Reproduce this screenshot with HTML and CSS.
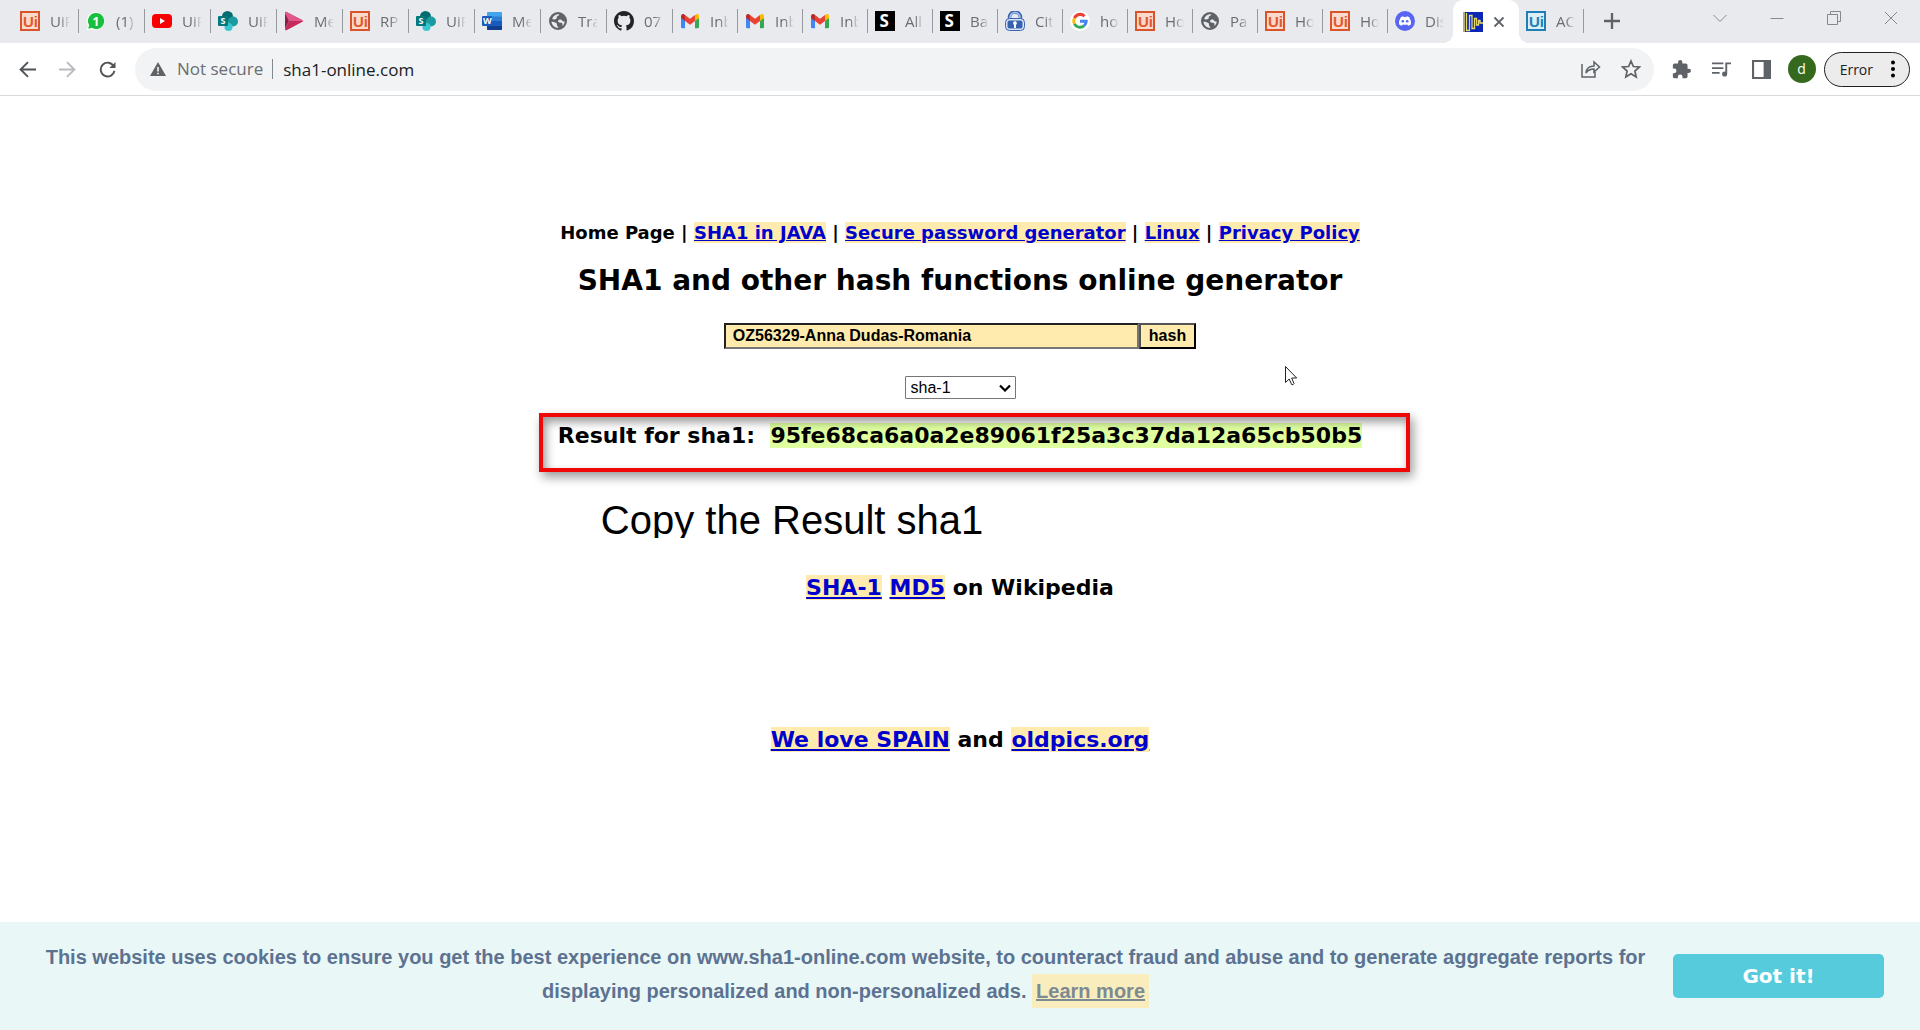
FILE: index.html
```html
<!DOCTYPE html>
<html lang="en">
<head>
<meta charset="utf-8">
<title>SHA1 and other hash functions online generator</title>
<link rel="stylesheet" href="styles.css">
</head>
<body>
<svg class="sprite" aria-hidden="true">
  <symbol id="i-uipath" viewBox="0 0 20 20"><rect width="20" height="20" fill="#fbd9cb"/><rect x="1" y="1" width="18" height="18" fill="none" stroke="#d9542b" stroke-width="2"/><text x="3" y="16" class="ico-ui">Ui</text></symbol>
  <symbol id="i-uiblue" viewBox="0 0 20 20"><rect width="20" height="20" fill="#d9f0fb"/><rect x="1" y="1" width="18" height="18" fill="none" stroke="#1f7fb5" stroke-width="2"/><text x="3" y="16" class="ico-ui ico-ui-blue">Ui</text></symbol>
  <symbol id="i-whatsapp" viewBox="0 0 20 20"><path d="M10 .8a9.3 9.3 0 0 1 0 18.500 9.300 9.300 0 0 1-4.500-1.100L.6 19.600l1.300-4.800A9.300 9.300 0 0 1 10 .8z" fill="#f4fff6"/><path d="M10.200 2a8 8 0 1 1-4.300 14.800L2.200 17.800l1-3.600A8 8 0 0 1 10.200 2z" fill="#17bf3e"/><text x="6.500" y="14.500" class="ico-one">1</text></symbol>
  <symbol id="i-youtube" viewBox="0 0 20 20"><rect y="3" width="20" height="14" rx="4" fill="#f60002"/><path d="M8 7v6l5-3z" fill="#fff"/></symbol>
  <symbol id="i-sharepoint" viewBox="0 0 20 20"><circle cx="9.500" cy="5.500" r="5.500" fill="#036c70"/><circle cx="15" cy="10.500" r="5" fill="#1a9ba1"/><circle cx="10.500" cy="16" r="4" fill="#37c6d0"/><rect y="5" width="10" height="10" rx="1" fill="#03787c"/><text x="2.500" y="13.300" class="ico-small">S</text></symbol>
  <symbol id="i-stream" viewBox="0 0 20 20"><path d="M1 1.500Q1 .5 2.500 1L18 9q2 1 0 2L3 19q-2 .8-2-.8L5 10z" fill="#c52a5b"/><path d="M1 1.500Q1 .5 2.500 1L18 9q1 .5 1 1H5z" fill="#e2568a"/><path d="M5 10L1 2v16z" fill="#8e1c45"/></symbol>
  <symbol id="i-word" viewBox="0 0 20 20"><rect x="5" y="1" width="15" height="18" rx="1" fill="#41a5ee"/><path d="M5 5.500h15v5H5z" fill="#2b7cd3"/><path d="M5 10h15v4.500H5z" fill="#185abd"/><path d="M5 14.500h15V18q0 1-1 1H6q-1 0-1-1z" fill="#103f91"/><rect y="5" width="10" height="10" rx="1" fill="#185abd"/><text x="1" y="13" class="ico-small">W</text></symbol>
  <symbol id="i-globe" viewBox="0 0 24 24"><path fill="#5f6368" d="M12 1.200a10.800 10.800 0 1 0 0 21.600 10.800 10.800 0 0 0 0-21.600zM4 13c2 .3 4.500.2 6 1.500 1.500 1.200 0 3 1.500 4 1 .6 1 1 .8 1.800A8.300 8.300 0 0 1 4 13zm13.500 5c-.5-1.500.5-2.500-.8-3.500-1-.9-3 .2-4.200-1.200-1.500-1.800 1-3.500 3-3 1.500.4 1.200 2.200 3 2.200h1.600A8.300 8.300 0 0 1 17.500 18zM13.500 4c0 2-2.500 2-3 3.300-.3 1 .5 2-.8 2.200-1.300.2-1.500 1-2.700.6L5 9.500A8.400 8.400 0 0 1 13.500 4z"/></symbol>
  <symbol id="i-github" viewBox="0 0 16 16"><path fill="#20242a" d="M8 0C3.580 0 0 3.580 0 8c0 3.540 2.290 6.530 5.470 7.590.4.070.55-.17.55-.38 0-.19-.01-.82-.01-1.490-2.010.37-2.530-.49-2.690-.94-.09-.23-.48-.94-.82-1.130-.28-.15-.68-.52-.01-.53.63-.01 1.080.58 1.230.82.72 1.210 1.870.87 2.330.66.07-.52.28-.87.51-1.070-1.780-.2-3.640-.89-3.640-3.950 0-.87.31-1.590.82-2.150-.08-.2-.36-1.020.08-2.120 0 0 .67-.21 2.200.82a7.600 7.600 0 0 1 4 0c1.530-1.040 2.200-.82 2.200-.82.44 1.100.16 1.920.08 2.120.51.56.82 1.270.82 2.150 0 3.070-1.870 3.750-3.650 3.950.29.25.54.73.54 1.480 0 1.070-.01 1.930-.01 2.200 0 .21.15.46.55.38A8 8 0 0 0 16 8c0-4.420-3.580-8-8-8z"/></symbol>
  <symbol id="i-gmail" viewBox="0 0 20 20"><path d="M1 6l4 3v8.300H2.300Q1 17.300 1 16z" fill="#4285f4"/><path d="M19 6l-4 3v8.300h2.700q1.300 0 1.300-1.300z" fill="#34a853"/><path d="M1 7V5q.2-2.500 2.600-2L5 4v6z" fill="#b92b27"/><path d="M19 7V5q-.2-2.500-2.600-2L15 4v6z" fill="#fbbc04"/><path d="M5 4l5 3.800L15 4v6l-5 3.700L5 10z" fill="#ea4335"/></symbol>
  <symbol id="i-s" viewBox="0 0 20 20"><rect width="20" height="20"/><text x="4.500" y="16" class="ico-s">S</text></symbol>
  <symbol id="i-lock" viewBox="0 0 20 20"><path d="M4.500 8V6.500a5.500 5.500 0 0 1 11 0V8" fill="none" stroke="#3b62ad" stroke-width="3.500"/><path d="M5 8V6.500a5 5 0 0 1 10 0V8" fill="none" stroke="#a9c6f0" stroke-width="1.500"/><rect x=".5" y="7.500" width="19" height="12" rx="4" fill="#d6e5fb" stroke="#3b62ad"/><rect x="2.500" y="9.500" width="15" height="8" rx="2" fill="#3763ae"/><path d="M10 10.300a1.900 1.900 0 0 1 1 3.500V17H9v-3.200a1.900 1.900 0 0 1 1-3.500z" fill="#fff"/></symbol>
  <symbol id="i-google" viewBox="0 0 20 20"><circle cx="10" cy="10" r="10" fill="#fff"/><g fill="none" stroke-width="3"><path d="M14.600 5.200A6.300 6.300 0 0 0 4.400 7.200" stroke="#ea4335"/><path d="M4.400 7.200a6.300 6.300 0 0 0 0 5.600" stroke="#fbbc04"/><path d="M4.400 12.800a6.300 6.300 0 0 0 9.600 2.100" stroke="#34a853"/><path d="M14 14.900A6.300 6.300 0 0 0 16.200 10.200H10" stroke="#4285f4"/></g></symbol>
  <symbol id="i-discord" viewBox="0 0 20 20"><circle cx="10" cy="10" r="10" fill="#5865f2"/><path d="M5.800 6.200Q7.500 5.300 8.300 5.300l.4.800h2.600l.4-.8q.8 0 2.500.9 2.200 3.500 1.800 7-1.200 1.200-2.900 1.500l-.8-1.200q-2.300.5-4.600 0l-.8 1.200Q5.200 14.400 4 13.200q-.4-3.500 1.800-7z" fill="#fff"/><circle cx="7.800" cy="10.300" r="1.300" fill="#5865f2"/><circle cx="12.200" cy="10.300" r="1.300" fill="#5865f2"/></symbol>
  <symbol id="i-wave" viewBox="0 0 20 20"><rect width="20" height="20" fill="#0b25b5"/><path d="M1 0v20" stroke="#e8dc70" stroke-width="1.500"/><path d="M3.500 1v17.500h3V3.500H9v13h2.500v-10h2V13h2V8.500H17V11h3" fill="none" stroke="#e8dc70" stroke-width="1.300"/></symbol>
</svg>

<header class="browser">
  <div class="tabstrip">
    <nav class="tabs" aria-label="Open tabs">
      <div class="tab wide"><svg><use href="#i-uipath"/></svg><span>UiP</span></div>
      <div class="tab wide"><svg><use href="#i-whatsapp"/></svg><span>(1)</span></div>
      <div class="tab wide"><svg><use href="#i-youtube"/></svg><span>UiP</span></div>
      <div class="tab wide"><svg><use href="#i-sharepoint"/></svg><span>UiP</span></div>
      <div class="tab wide"><svg><use href="#i-stream"/></svg><span>Me</span></div>
      <div class="tab wide"><svg><use href="#i-uipath"/></svg><span>RP</span></div>
      <div class="tab wide"><svg><use href="#i-sharepoint"/></svg><span>UiP</span></div>
      <div class="tab wide"><svg><use href="#i-word"/></svg><span>Me</span></div>
      <div class="tab wide"><svg><use href="#i-globe"/></svg><span>Tra</span></div>
      <div class="tab wide"><svg><use href="#i-github"/></svg><span>07</span></div>
      <div class="tab"><svg><use href="#i-gmail"/></svg><span>Inb</span></div>
      <div class="tab"><svg><use href="#i-gmail"/></svg><span>Inb</span></div>
      <div class="tab"><svg><use href="#i-gmail"/></svg><span>Inb</span></div>
      <div class="tab"><svg><use href="#i-s"/></svg><span>All</span></div>
      <div class="tab"><svg><use href="#i-s"/></svg><span>Ba</span></div>
      <div class="tab"><svg><use href="#i-lock"/></svg><span>Cit</span></div>
      <div class="tab"><svg><use href="#i-google"/></svg><span>ho</span></div>
      <div class="tab"><svg><use href="#i-uipath"/></svg><span>Ho</span></div>
      <div class="tab"><svg><use href="#i-globe"/></svg><span>Pa</span></div>
      <div class="tab"><svg><use href="#i-uipath"/></svg><span>Ho</span></div>
      <div class="tab"><svg><use href="#i-uipath"/></svg><span>Ho</span></div>
      <div class="tab before-active"><svg><use href="#i-discord"/></svg><span>Dis</span></div>
      <div class="tab active"><svg><use href="#i-wave"/></svg><button class="close" aria-label="Close tab"><svg viewBox="0 0 12 12"><path d="M1.500 1.500l9 9m0-9l-9 9" stroke="#5f6368" stroke-width="1.800"/></svg></button></div>
      <div class="tab"><svg><use href="#i-uiblue"/></svg><span>AC</span></div>
      <button class="newtab" aria-label="New tab"><svg viewBox="0 0 16 16"><path d="M8 0v16M0 8h16" stroke="#5f6368" stroke-width="2.300"/></svg></button>
    </nav>
    <div class="window-controls">
      <button aria-label="Search tabs"><svg viewBox="0 0 14 14"><path d="M.5 4L7 10.500 13.500 4"/></svg></button>
      <button aria-label="Minimize"><svg viewBox="0 0 14 14"><path d="M.5 7.500h13"/></svg></button>
      <button aria-label="Restore"><svg viewBox="0 0 14 14"><path d="M.5 3.500h10v10H.5zM3.500 3V.5h10v10H11"/></svg></button>
      <button aria-label="Close"><svg viewBox="0 0 14 14"><path d="M1 1l12 12M13 1L1 13"/></svg></button>
    </div>
  </div>
  <div class="toolbar">
    <div class="navbuttons">
      <button aria-label="Back"><svg viewBox="0 0 16 16"><path d="M16 8H1.500M8.500 1L1.500 8l7 7" fill="none" stroke="#505357" stroke-width="1.800"/></svg></button>
      <button aria-label="Forward"><svg viewBox="0 0 16 16"><path d="M0 8h14.500M7.500 1l7 7-7 7" fill="none" stroke="#b9bbbe" stroke-width="1.800"/></svg></button>
      <button aria-label="Reload"><svg viewBox="0 0 18 18"><path d="M15.500 5.500A7.300 7.300 0 1 0 16.300 10.500" fill="none" stroke="#505357" stroke-width="2"/><path d="M17.500 1v6.500H11z" fill="#505357"/></svg></button>
    </div>
    <div class="omnibox">
      <svg class="warn" viewBox="0 0 16 14"><path d="M8 0l8 14H0z" fill="#5f6368"/><path d="M8 5v4.500M8 10.700v1.600" stroke="#fff" stroke-width="1.500"/></svg>
      <span class="insecure">Not secure</span>
      <input class="url" type="text" aria-label="Address" value="sha1-online.com">
      <button aria-label="Share"><svg viewBox="0 0 20 18"><path d="M1 4v13h13v-5M5 13c.5-5 3.500-7 8-7V2l5.500 5-5.500 5V9c-4 0-6 1-8 4z" fill="none" stroke="#5f6368" stroke-width="1.500"/></svg></button>
      <button aria-label="Bookmark"><svg viewBox="0 0 20 20"><path d="M10 2l2.400 5.500 6 .5-4.500 4 1.300 6L10 14.800 4.800 18l1.300-6-4.500-4 6-.5z" fill="none" stroke="#5f6368" stroke-width="1.700"/></svg></button>
    </div>
    <div class="tools">
      <button aria-label="Extensions"><svg viewBox="1 1 22 22"><path fill="#5f6368" d="M20.500 11H19V7a2 2 0 0 0-2-2h-4V3.500a2.500 2.500 0 0 0-5 0V5H4a2 2 0 0 0-2 2v3.800h1.500a2.700 2.700 0 0 1 0 5.400H2V20c0 1.100.9 2 2 2h3.800v-1.500a2.700 2.700 0 0 1 5.400 0V22H17a2 2 0 0 0 2-2v-4h1.500a2.500 2.500 0 0 0 0-5z"/></svg></button>
      <button aria-label="Media"><svg viewBox="0 0 20 16"><path d="M0 1.500h12M0 6.500h12M0 11.500h8" stroke="#5f6368" stroke-width="2"/><path d="M15 12V1.500h5" fill="none" stroke="#5f6368" stroke-width="2"/><circle cx="13.300" cy="12.700" r="2.700" fill="#5f6368"/></svg></button>
      <button aria-label="Side panel"><svg viewBox="0 0 18 18"><path d="M1 1h16v16H1z" fill="none" stroke="#5f6368" stroke-width="2"/><path d="M11 1h6v16h-6z" fill="#5f6368"/></svg></button>
    </div>
    <span class="avatar">d</span>
    <button class="error">Error <svg viewBox="0 0 4 18"><circle cx="2" cy="2.500" r="2"/><circle cx="2" cy="9" r="2"/><circle cx="2" cy="15.500" r="2"/></svg></button>
  </div>
</header>

<main class="page">
  <nav class="links">Home Page | <a href="#">SHA1 in JAVA</a> | <a href="#">Secure password generator</a> | <a href="#">Linux</a> | <a href="#">Privacy Policy</a></nav>
  <h1>SHA1 and other hash functions online generator</h1>
  <form class="hashform">
    <div class="query">
      <input type="text" aria-label="Text to hash" value="OZ56329-Anna Dudas-Romania">
      <button type="button">hash</button>
    </div>
    <div class="pick">
      <select aria-label="Hash function"><option>sha-1</option><option>md5</option></select>
      <svg viewBox="0 0 12 8"><path d="M1 1.500l5 5 5-5" fill="none" stroke="#000" stroke-width="2.200"/></svg>
    </div>
  </form>
  <div class="result">
    <p>Result for sha1:&nbsp; <mark>95fe68ca6a0a2e89061f25a3c37da12a65cb50b5</mark></p>
    <div class="callout"></div>
    <div class="caption">Copy the Result sha1</div>
  </div>
  <p class="wiki"><a href="#">SHA-1</a> <a href="#">MD5</a> on Wikipedia</p>
  <p class="friends"><a href="#">We love SPAIN</a> and <a href="#">oldpics.org</a></p>
  <svg class="cursor" viewBox="0 0 13 20"><path d="M.5.5v16l3.700-3.500 2.500 5.600q1.500.6 2.300-1L6.700 12h5z" fill="#fff" stroke="#222"/></svg>
</main>

<footer class="cookies">
  <p>This website uses cookies to ensure you get the best experience on www.sha1-online.com website, to counteract fraud and abuse and to generate aggregate reports for displaying personalized and non-personalized ads. <a href="#">Learn more</a></p>
  <button>Got it!</button>
</footer>
</body>
</html>
```
FILE: styles.css
```css
* { box-sizing: border-box; }
body {
  margin: 0;
  min-height: 100vh;
  display: flex;
  flex-direction: column;
  background: #fff;
  color: #000;
  font-family: Verdana, "DejaVu Sans", sans-serif;
  font-weight: bold;
}
button { border: 0; padding: 0; background: none; font: inherit; color: inherit; }
p, h1 { margin: 0; }
.sprite { display: none; }
.ico-ui { font: bold 15px "Liberation Sans", sans-serif; fill: #e2582d; }
.ico-ui-blue { fill: #1f7fb5; }
.ico-one { font: bold 12px "Open Sans", sans-serif; fill: #fff; }
.ico-small { font: bold 9px "Open Sans", sans-serif; fill: #fff; }
.ico-s { font: bold 17px "Open Sans", sans-serif; fill: #fff; }

/* Browser chrome */
.browser {
  font-family: "Segoe UI", "Open Sans", sans-serif;
  font-weight: normal;
  border-bottom: 1px solid #d9dadc;
}
.tabstrip {
  display: flex;
  justify-content: space-between;
  height: 43px;
  background: #e8eaed;
}
.tabs { display: flex; align-items: flex-start; padding-left: 13px; }
.tab {
  display: flex;
  align-items: center;
  gap: 10px;
  flex: none;
  width: 65px;
  height: 24px;
  margin-top: 9px;
  padding: 0 8px 0 7px;
  border-right: 1px solid #96999d;
}
.tab.wide { width: 66px; }
.tab > svg { flex: none; width: 20px; height: 20px; }
.tab span {
  flex: 1;
  overflow: hidden;
  white-space: nowrap;
  font-size: 15px;
  line-height: 20px;
  color: #6a6d71;
  -webkit-mask-image: linear-gradient(to right, #000 50%, transparent);
  mask-image: linear-gradient(to right, #000 50%, transparent);
}
.tab.before-active { border-color: transparent; }
.tab.active {
  position: relative;
  width: 66px;
  height: 43px;
  margin: 0;
  padding: 0 10px;
  border: 0;
  border-radius: 10px 10px 0 0;
  background: #fff;
}
.tab.active::before, .tab.active::after {
  content: "";
  position: absolute;
  bottom: 0;
  width: 10px;
  height: 10px;
}
.tab.active::before { right: 100%; background: radial-gradient(circle at 0 0, transparent 10px, #fff 10px); }
.tab.active::after { left: 100%; background: radial-gradient(circle at 100% 0, transparent 10px, #fff 10px); }
.close, .close svg { display: block; width: 12px; height: 12px; }
.newtab { margin: 13px 0 0 20px; }
.newtab svg { display: block; width: 16px; height: 16px; }
.window-controls { display: flex; align-items: flex-start; gap: 43px; padding: 11px 22px 0 0; }
.window-controls svg { display: block; width: 14px; height: 14px; fill: none; stroke: #85888c; }

.toolbar { display: flex; align-items: center; height: 52px; padding-right: 10px; }
.navbuttons { display: flex; gap: 23px; padding: 0 19px 0 19px; }
.navbuttons svg { display: block; width: 17px; height: 17px; }
.omnibox {
  flex: 1;
  display: flex;
  align-items: center;
  height: 43px;
  padding: 0 13px 0 15px;
  border-radius: 22px;
  background: #f1f3f4;
}
.omnibox button svg { display: block; width: 20px; height: 20px; }
.omnibox button + button { margin-left: 20px; }
.omnibox .warn { width: 16px; height: 14px; }
.insecure {
  margin: 0 9px 0 11px;
  font-size: 17px;
  line-height: 20px;
  color: #6a6d71;
}
.url {
  flex: 1;
  height: 20px;
  padding: 0 0 0 10px;
  border: 0;
  border-left: 1px solid #85888c;
  background: none;
  font: 17px "Segoe UI", "Open Sans", sans-serif;
  color: #202124;
}
.tools { display: flex; gap: 21px; margin: 0 17px 0 18px; }
.tools svg { display: block; width: 19px; height: 19px; }
.avatar {
  width: 28px;
  height: 28px;
  border-radius: 50%;
  background: #34691e;
  color: #fff;
  font-size: 14px;
  line-height: 28px;
  text-align: center;
}
.error {
  display: flex;
  align-items: center;
  gap: 18px;
  height: 35px;
  margin-left: 8px;
  padding: 0 14px 0 15px;
  border: 1px solid #202124;
  border-radius: 18px;
  background: #ececec;
  font-size: 14px;
  color: #202124;
}
.error svg { width: 4px; height: 18px; }

/* Page */
.page {
  position: relative;
  flex: 1;
  padding-top: 126px;
  text-align: center;
}
.page a { color: #0000cc; background: #ffebad; }
.links { font-size: 18px; line-height: 22px; }
h1 { margin-top: 19px; font-size: 28px; line-height: 36px; }
.query { display: flex; justify-content: center; margin-top: 24px; }
.query input {
  width: 415px;
  height: 26px;
  padding: 0 7px;
  border: 2px inset #767676;
  background: #ffebad;
  font: bold 16px Arial, "Liberation Sans", sans-serif;
  color: #000;
}
.query button {
  height: 26px;
  padding: 0 8px;
  border: 2px outset #000;
  background: #ffebad;
  font: bold 16px Arial, "Liberation Sans", sans-serif;
}
.pick { display: grid; justify-content: center; align-items: center; margin-top: 27px; }
.pick > * { grid-area: 1 / 1; }
.pick select {
  appearance: none;
  width: 111px;
  height: 23px;
  padding: 0 5px;
  border: 1px solid #767676;
  border-radius: 1px;
  background: #fff;
  font: 16px Arial, "Liberation Sans", sans-serif;
  color: #000;
}
.pick svg { justify-self: end; width: 12px; height: 8px; margin-right: 5px; pointer-events: none; }
.result { position: relative; width: max-content; margin: 23px auto 0; }
.result p, .wiki, .friends { font-size: 22px; line-height: 27px; }
.result mark { background: #dfffa0; color: #000; }
.callout {
  position: absolute;
  inset: -9px -48px -23px -19px;
  border: 4px solid #f00707;
  box-shadow: 3px 5px 10px rgba(0, 0, 0, .4), inset 3px 5px 10px rgba(0, 0, 0, .4);
}
.caption {
  position: absolute;
  top: 76px;
  left: 43px;
  height: 40px;
  overflow: hidden;
  font: 40px/44px Arial, "Liberation Sans", sans-serif;
}
.wiki { margin-top: 125px; }
.friends { margin-top: 125px; }
.cursor { position: absolute; top: 270px; left: calc(50% + 325px); width: 13px; height: 20px; }

/* Cookie banner */
.cookies {
  display: flex;
  align-items: center;
  gap: 18px;
  padding: 18px 36px 22px;
  background: #eaf7f7;
  font-family: Helvetica, "Liberation Sans", sans-serif;
}
.cookies p { flex: 1; font-size: 20px; line-height: 34px; text-align: center; color: #5c7291; }
.cookies a { padding: 6px 4px; background: #f9edbe; color: #7d8a91; }
.cookies button {
  width: 211px;
  height: 44px;
  margin-top: 4px;
  border-radius: 5px;
  background: #56cbdb;
  color: #fff;
  font: bold 20px Verdana, "DejaVu Sans", sans-serif;
}
```
